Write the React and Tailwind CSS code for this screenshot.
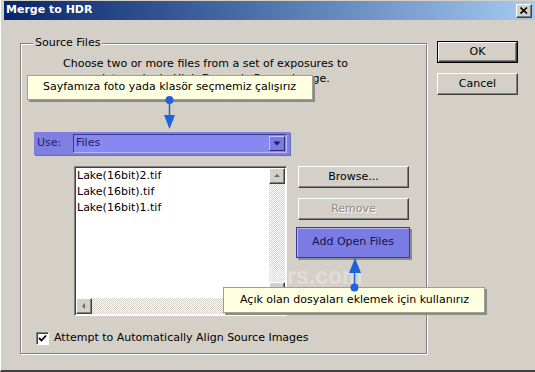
import React from 'react'

const files = ['Lake(16bit)2.tif', 'Lake(16bit).tif', 'Lake(16bit)1.tif']

// classic 3d button frame
const bevel = 'border border-t-white border-l-white border-r-[#404040] border-b-[#404040] shadow-[inset_-1px_-1px_0_#808080]'

function ScrollBtn({ dir }) {
  const pts = {
    up: '2,6 5,3 8,6',
    down: '2,3 5,6 8,3',
    left: '6,2 3,5 6,8',
    right: '3,2 6,5 3,8',
  }[dir]
  return (
    <div className={`w-[16px] h-[16px] shrink-0 bg-[#d4d0c8] flex items-center justify-center ${bevel}`}>
      <svg width="10" height="10" viewBox="0 0 10 10">
        <polygon points={pts} fill="#6a6a6a" />
      </svg>
    </div>
  )
}

function Button({ children, isDefault, disabled }) {
  return (
    <div className={`h-[22px] ${isDefault ? 'border border-black' : ''}`}>
      <div className={`h-full bg-[#d4d0c8] flex items-center justify-center ${bevel} ${disabled ? 'text-[#8a8a8a] [text-shadow:1px_1px_0_#fff]' : ''}`}>
        {children}
      </div>
    </div>
  )
}

const checker = 'bg-[repeating-conic-gradient(#ffffff_0%_25%,#d4d0c8_0%_50%)] bg-[length:2px_2px]'

export default function App() {
  return (
    <div className="w-[535px] h-[372px] bg-[#d4d0c8] relative overflow-hidden flex flex-col pl-[3px] pt-[1px] border-b-2 border-b-[#404040] border-l border-l-white font-['DejaVu_Sans',sans-serif] text-[11px] text-black">
      {/* Title bar */}
      <div className="h-[19px] shrink-0 bg-linear-to-r from-[#0a246a] to-[#a6caf0] flex items-center justify-between pl-[2px] pr-[3px]">
        <span className="font-bold text-white text-[11px]">Merge to HDR</span>
        <div className={`w-[16px] h-[14px] bg-[#d4d0c8] flex items-center justify-center ${bevel}`}>
          <svg width="8" height="7" viewBox="0 0 8 7">
            <path d="M0.5 0.5 L7 6.5 M7 0.5 L0.5 6.5" stroke="#000" strokeWidth="1.6" />
          </svg>
        </div>
      </div>

      <div className="flex">
        {/* Source Files group */}
        <div className="ml-[16px] mt-[23px] w-[407px] h-[311px] border border-[#808080] shadow-[inset_1px_1px_0_#fff,1px_1px_0_#fff] relative">
          <span className="absolute left-[12px] -top-[8px] px-[2px] bg-[#d4d0c8] leading-[14px]">Source Files</span>

          <div className="mt-[12px] pl-[42px] leading-[15px]">
            <div>Choose two or more files from a set of exposures to</div>
            <div>merge into a single High Dynamic Range image.</div>
          </div>

          {/* Use row */}
          <div className="mt-[46px] ml-[13px] w-[256px] h-[23px] bg-[#7f7fe2] shadow-[1px_1px_0_#6a6ab0] flex items-center pl-[3px] pr-[3px]">
            <span className="w-[36px] text-[#22226a]">Use:</span>
            <div className="flex-1 h-[19px] bg-[#8888f2] border border-[#3c3c8c] border-r-[#b8b8f8] border-b-[#b8b8f8] flex items-center justify-between pl-[2px] pr-[1px]">
              <span className="text-[#1c1c5a]">Files</span>
              <div className="w-[16px] h-[15px] bg-[#7a7ae6] border border-t-[#c0c0ff] border-l-[#c0c0ff] border-r-[#2a2a70] border-b-[#2a2a70] flex items-center justify-center">
                <svg width="8" height="5" viewBox="0 0 8 5">
                  <polygon points="0.5,0.5 7.5,0.5 4,4.5" fill="#1c1c5a" />
                </svg>
              </div>
            </div>
          </div>

          {/* List + buttons */}
          <div className="mt-[11px] ml-[53px] flex gap-[11px]">
            <div className="w-[213px] h-[150px] bg-white border border-[#808080] border-r-white border-b-white shadow-[inset_1px_1px_0_#404040] flex flex-col p-[1px]">
              <div className="flex flex-1 min-h-0">
                <div className="flex-1 pl-[1px] leading-[16px]">
                  {files.map(f => (
                    <div key={f}>{f}</div>
                  ))}
                </div>
                <div className={`w-[16px] flex flex-col justify-between ${checker}`}>
                  <ScrollBtn dir="up" />
                  <ScrollBtn dir="down" />
                </div>
              </div>
              <div className="h-[16px] flex">
                <div className={`flex-1 flex justify-between ${checker}`}>
                  <ScrollBtn dir="left" />
                  <ScrollBtn dir="right" />
                </div>
                <div className="w-[16px] bg-[#d4d0c8]" />
              </div>
            </div>

            <div className="w-[111px] flex flex-col">
              <Button>Browse...</Button>
              <div className="mt-[10px]">
                <Button disabled>Remove</Button>
              </div>
              <div className="mt-[7px] -ml-[2px] w-[114px] h-[31px] bg-[#7b7be6] border border-[#3a3a92] shadow-[inset_1px_1px_0_#b4b4fa,2px_2px_0_#8a8a8a] flex items-center justify-center text-[#14144a]">
                Add Open Files
              </div>
            </div>
          </div>

          {/* Checkbox */}
          <div className="mt-[14px] ml-[15px] flex items-center gap-[5px]">
            <div className="w-[13px] h-[13px] bg-white border border-[#808080] border-r-white border-b-white shadow-[inset_1px_1px_0_#404040] flex items-center justify-center">
              <svg width="9" height="9" viewBox="0 0 9 9">
                <path d="M1 4 L3.5 6.5 L8 1.5" stroke="#000" strokeWidth="1.8" fill="none" />
              </svg>
            </div>
            <span>Attempt to Automatically Align Source Images</span>
          </div>
        </div>

        {/* OK / Cancel */}
        <div className="ml-[10px] mt-[21px] w-[81px] flex flex-col gap-[10px]">
          <Button isDefault>OK</Button>
          <Button>Cancel</Button>
        </div>
      </div>

      {/* watermark */}
      <span className="absolute left-[140px] top-[259px] font-['Liberation_Sans',sans-serif] font-bold text-[23px] text-white/30 pointer-events-none">
        www.dijitalders.com
      </span>

      {/* Tooltip: source selection */}
      <div className="absolute left-[26px] top-[75px] w-[286px] h-[25px] bg-[#ffffe1] border border-[#a0a090] shadow-[2px_2px_0_#8c8c84] flex items-center pl-[15px]">
        Sayfamıza foto yada klasör seçmemiz çalışırız
      </div>
      <svg className="absolute left-[160px] top-[94px]" width="18" height="38" viewBox="0 0 18 38">
        <line x1="8.5" y1="6" x2="8.5" y2="22" stroke="#1e62dc" strokeWidth="1.5" />
        <polygon points="3,21 14,21 8.5,35" fill="#1e62dc" />
        <circle cx="8.5" cy="6" r="4" fill="#1e62dc" />
      </svg>

      {/* Tooltip: add open files */}
      <svg className="absolute left-[344px] top-[254px]" width="20" height="40" viewBox="0 0 20 40">
        <polygon points="10,4 4,19 16,19" fill="#1e62dc" />
        <line x1="9.5" y1="19" x2="9.5" y2="33" stroke="#1e62dc" strokeWidth="1.5" />
      </svg>
      <div className="absolute left-[222px] top-[287px] w-[262px] h-[26px] bg-[#ffffe1] border border-[#a0a090] shadow-[2px_2px_0_#8c8c84] flex items-center pl-[16px]">
        Açık olan dosyaları eklemek için kullanırız
      </div>
      <svg className="absolute left-[349px] top-[283px]" width="9" height="9" viewBox="0 0 9 9">
        <circle cx="4.5" cy="4.5" r="4" fill="#1e62dc" />
      </svg>
    </div>
  )
}
